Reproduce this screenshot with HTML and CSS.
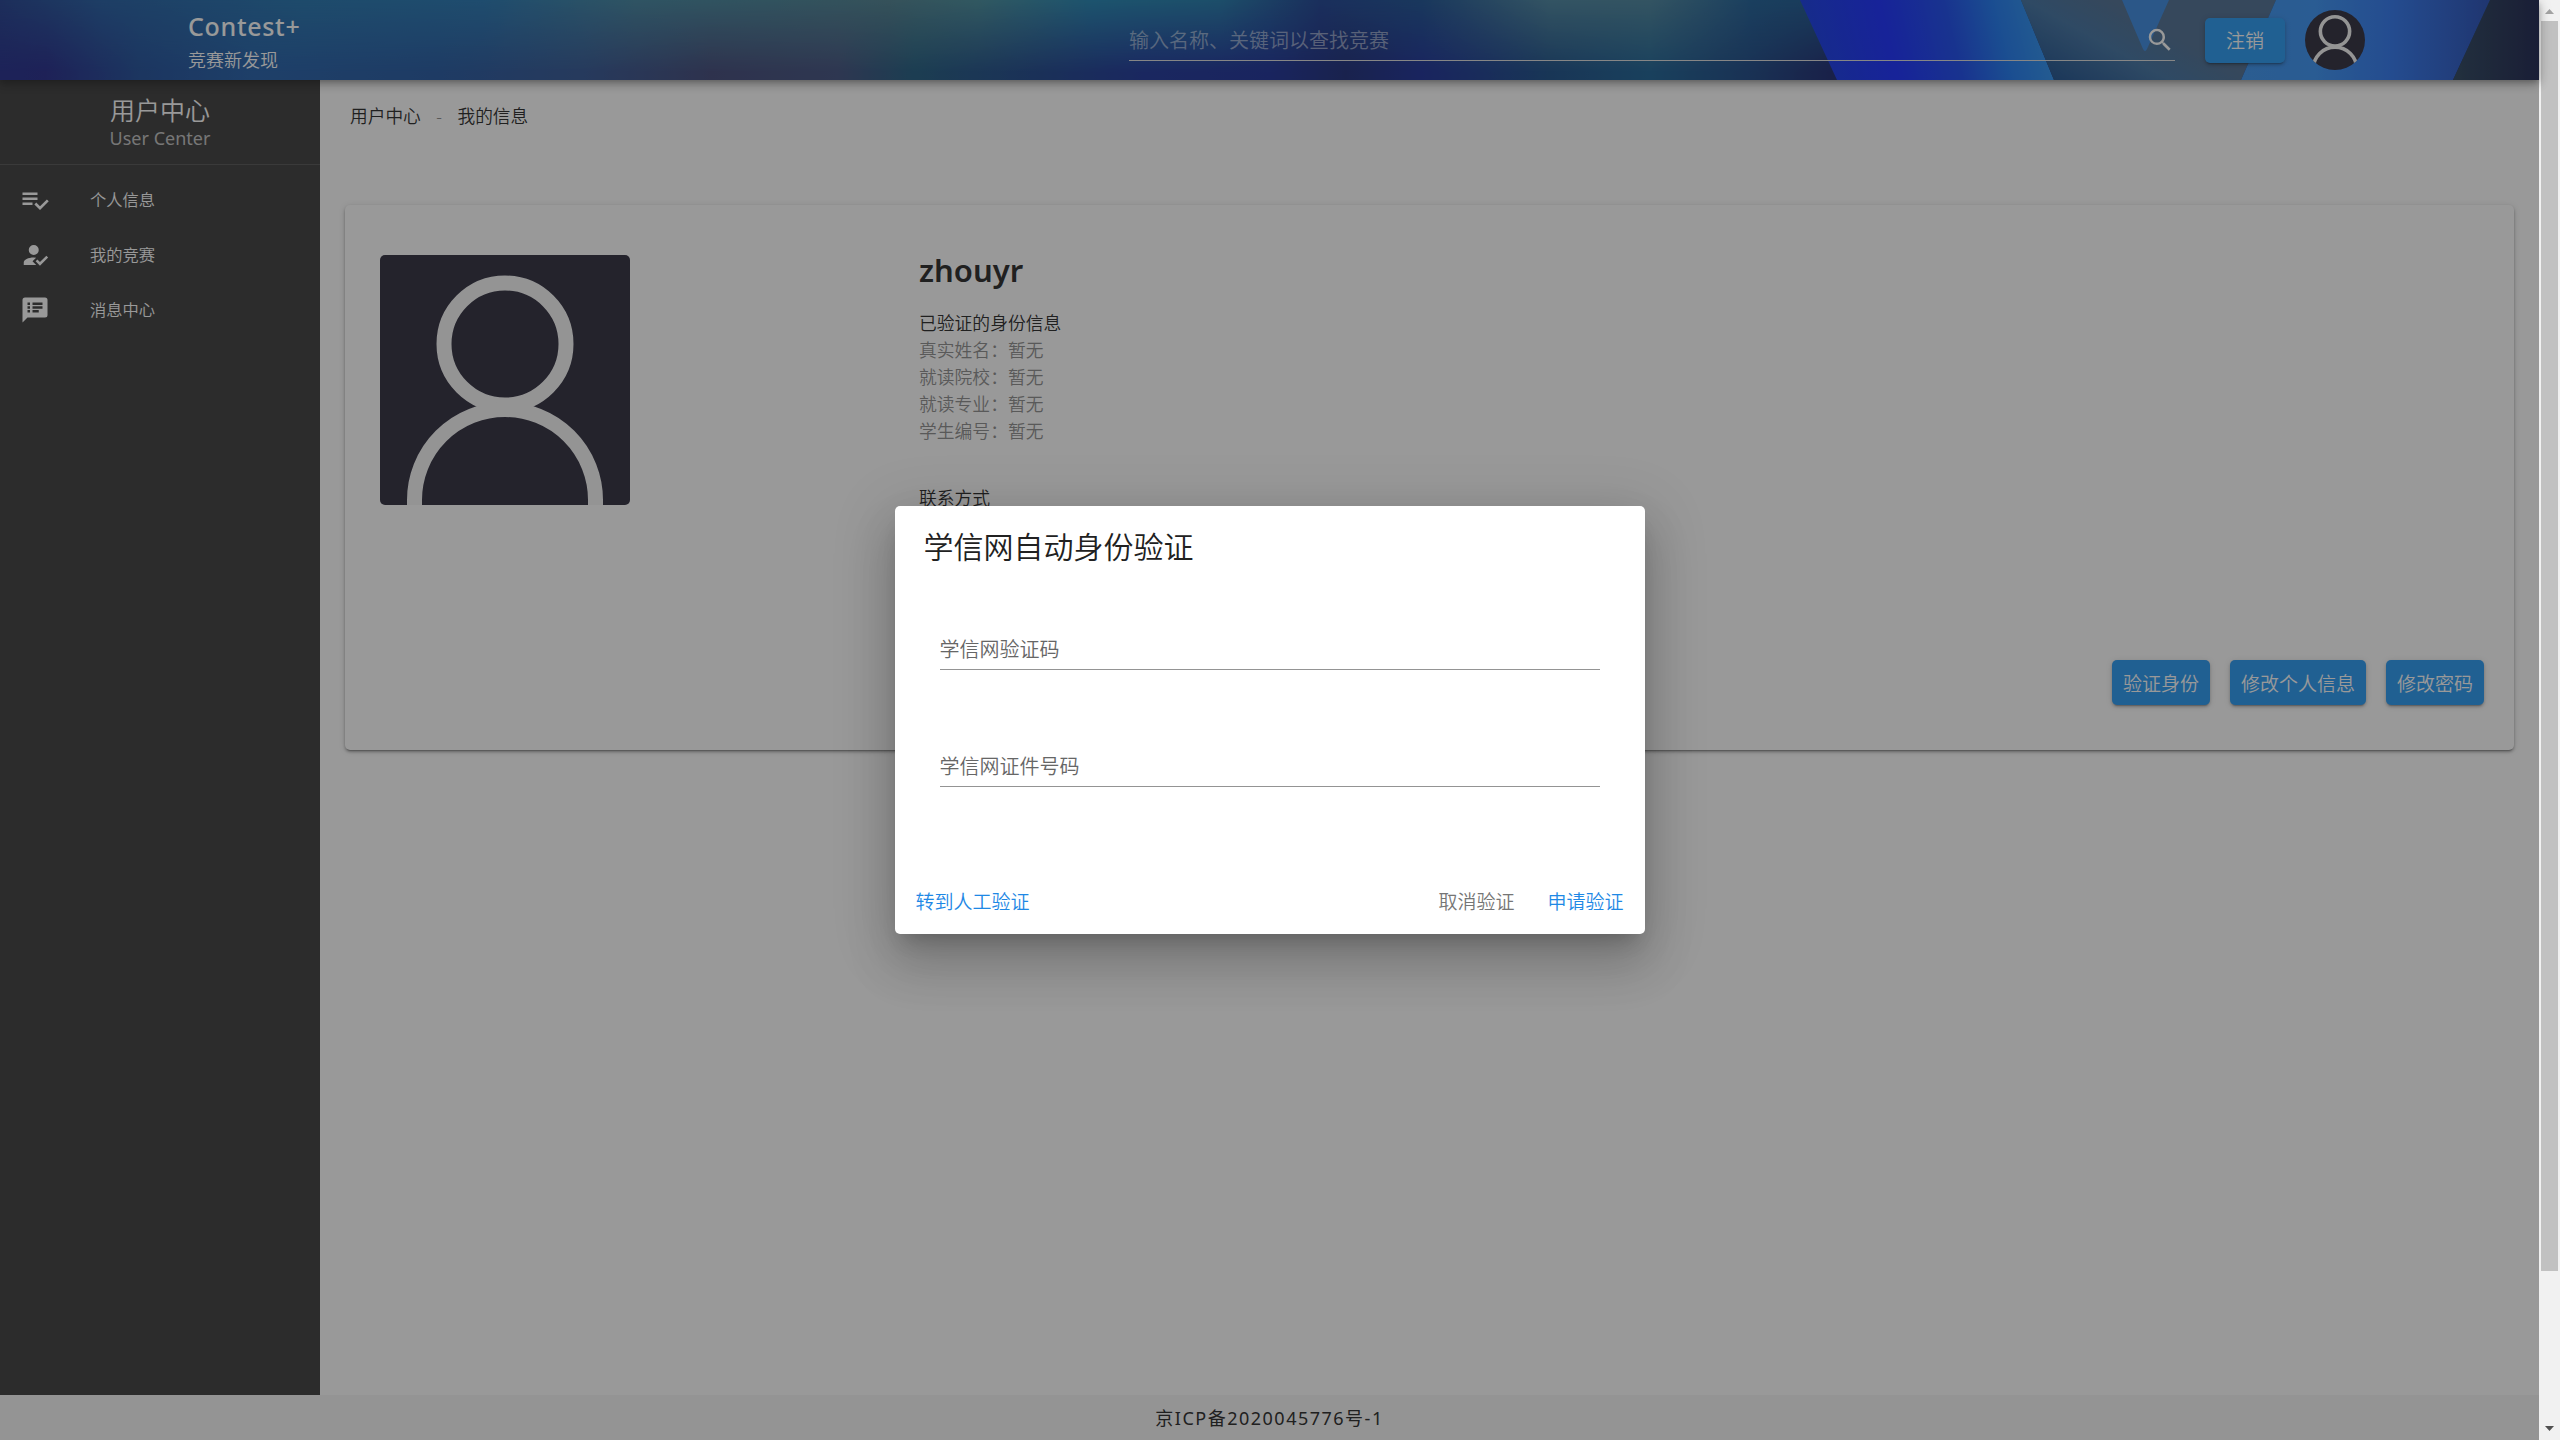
FILE: index.html
```html
<!DOCTYPE html>
<html lang="zh-CN">
<head>
<meta charset="utf-8">
<title>Contest+</title>
<link rel="stylesheet" href="styles.css">
</head>
<body>
<svg class="defs" aria-hidden="true">
  <symbol id="person" viewBox="0 0 250 250">
    <rect width="250" height="250" fill="#272537"/>
    <g fill="none" stroke="#f5f5f5" stroke-width="15">
      <circle cx="125" cy="89" r="61"/>
      <path d="M34.500 252V245a90.500 90.500 0 0 1 181 0V252"/>
    </g>
  </symbol>
</svg>
<div class="window">
  <div class="app">
    <header class="topbar">
      <svg class="topbar-art" viewBox="0 0 2539 80" preserveAspectRatio="none">
        <defs>
          <linearGradient id="top">
            <stop offset="0" stop-color="#1a3a8c"/>
            <stop offset=".04" stop-color="#1c58a0"/>
            <stop offset=".12" stop-color="#1c6fac"/>
            <stop offset=".19" stop-color="#1e72b0"/>
            <stop offset=".25" stop-color="#3c809c"/>
            <stop offset=".3" stop-color="#407e94"/>
            <stop offset=".35" stop-color="#487c8c"/>
            <stop offset=".385" stop-color="#408898"/>
            <stop offset=".43" stop-color="#1a80b0"/>
            <stop offset=".48" stop-color="#1a76a8"/>
            <stop offset=".52" stop-color="#163c90"/>
            <stop offset=".56" stop-color="#144c90"/>
            <stop offset=".61" stop-color="#44809c"/>
            <stop offset=".65" stop-color="#44809a"/>
            <stop offset=".69" stop-color="#165a94"/>
            <stop offset=".72" stop-color="#14548c"/>
          </linearGradient>
          <linearGradient id="bottom">
            <stop offset="0" stop-color="#1a2488"/>
            <stop offset=".018" stop-color="#1c2286"/>
            <stop offset=".055" stop-color="#184896"/>
            <stop offset=".1" stop-color="#1c5aa6"/>
            <stop offset=".17" stop-color="#1c529e"/>
            <stop offset=".23" stop-color="#2c5090"/>
            <stop offset=".28" stop-color="#3a4274"/>
            <stop offset=".33" stop-color="#3a4a7a"/>
            <stop offset=".36" stop-color="#18567c"/>
            <stop offset=".41" stop-color="#163e88"/>
            <stop offset=".45" stop-color="#162e96"/>
            <stop offset=".5" stop-color="#142894"/>
            <stop offset=".53" stop-color="#142474"/>
            <stop offset=".56" stop-color="#142894"/>
            <stop offset=".61" stop-color="#124884"/>
            <stop offset=".65" stop-color="#145c90"/>
            <stop offset=".69" stop-color="#144080"/>
            <stop offset=".72" stop-color="#14226c"/>
          </linearGradient>
          <linearGradient id="fade" x2="0" y2="1">
            <stop offset="0" stop-color="#000"/>
            <stop offset=".9" stop-color="#fff"/>
          </linearGradient>
          <mask id="lower"><rect width="2539" height="80" fill="url(#fade)"/></mask>
          <linearGradient id="band" gradientUnits="userSpaceOnUse" x1="1800" y1="60" x2="2050" y2="0">
            <stop offset="0" stop-color="#0e38e0"/>
            <stop offset=".35" stop-color="#0f25ff"/>
            <stop offset=".6" stop-color="#1244ec"/>
            <stop offset=".78" stop-color="#1674f0"/>
            <stop offset="1" stop-color="#2b96f0"/>
          </linearGradient>
          <linearGradient id="slate" gradientUnits="userSpaceOnUse" x1="2060" y1="90" x2="2110" y2="0">
            <stop offset="0" stop-color="#144888"/>
            <stop offset=".6" stop-color="#3b6d9e"/>
            <stop offset="1" stop-color="#48698e"/>
          </linearGradient>
          <linearGradient id="light">
            <stop offset="0" stop-color="#3490f0"/>
            <stop offset=".3" stop-color="#328ef4"/>
            <stop offset=".6" stop-color="#2872ee"/>
            <stop offset="1" stop-color="#1f48b4"/>
          </linearGradient>
          <linearGradient id="edge">
            <stop offset="0" stop-color="#243e58"/>
            <stop offset="1" stop-color="#141c48"/>
          </linearGradient>
        </defs>
        <rect width="2539" height="80" fill="url(#top)"/>
        <rect width="2539" height="80" fill="url(#bottom)" mask="url(#lower)"/>
        <path d="M1800 0H2021L2054 80H1837Z" fill="url(#band)"/>
        <path d="M2021 0H2276L2241 80H2054Z" fill="url(#slate)"/>
        <path d="M2122 0H2169L2147 49Q2145 53 2143 49Z" fill="#3486e0"/>
        <path d="M2276 0H2490L2453 80H2241Z" fill="url(#light)"/>
        <path d="M2490 0H2539V80H2453Z" fill="url(#edge)"/>
      </svg>
      <div class="brand">
        <div class="brand-name">Contest+</div>
        <div class="brand-sub">竞赛新发现</div>
      </div>
      <div class="search">
        <span>输入名称、关键词以查找竞赛</span>
        <svg class="icon" viewBox="0 0 24 24"><path d="M9.500 3A6.500 6.500 0 0 1 16 9.500c0 1.610-.59 3.090-1.560 4.230l.27.270h.79l5 5-1.500 1.500-5-5v-.79l-.27-.27A6.516 6.516 0 0 1 9.500 16a6.500 6.500 0 0 1 0-13m0 2C7 5 5 7 5 9.500S7 14 9.500 14 14 12 14 9.500 12 5 9.500 5Z"/></svg>
      </div>
      <button class="btn logout">注销</button>
      <svg class="avatar-small"><use href="#person"/></svg>
    </header>
    <div class="body">
      <aside class="sidebar">
        <div class="side-head">
          <div class="side-title">用户中心</div>
          <div class="side-sub">User Center</div>
        </div>
        <nav class="menu">
          <a class="menu-item"><svg class="icon" viewBox="0 0 24 24"><path d="M14 10H2v2h12v-2m0-4H2v2h12V6M2 16h8v-2H2v2m19.500-4.500L23 13l-6.990 7-4.510-4.500L13 14l3.010 3 5.490-5.500Z"/></svg><span>个人信息</span></a>
          <a class="menu-item"><svg class="icon" viewBox="0 0 24 24"><path d="M21.100 12.500l1.400 1.410-6.530 6.590L12.500 17l1.400-1.410 2.070 2.080 5.130-5.170M10 17l3 3H3v-2c0-2.210 3.580-4 8-4l1.890.11L10 17m1-13a4 4 0 0 1 4 4 4 4 0 0 1-4 4 4 4 0 0 1-4-4 4 4 0 0 1 4-4Z"/></svg><span>我的竞赛</span></a>
          <a class="menu-item"><svg class="icon" viewBox="0 0 24 24"><path d="M20 2H4a2 2 0 0 0-2 2v18l4-4h14a2 2 0 0 0 2-2V4a2 2 0 0 0-2-2M8 14H6v-2h2v2m0-3H6V9h2v2m0-3H6V6h2v2m7 6h-5v-2h5v2m3-3h-8V9h8v2m0-3h-8V6h8v2Z"/></svg><span>消息中心</span></a>
        </nav>
      </aside>
      <main class="main">
        <div class="crumbs"><span>用户中心</span><span class="sep">-</span><span>我的信息</span></div>
        <section class="card">
          <svg class="avatar"><use href="#person"/></svg>
          <div class="info">
            <h1>zhouyr</h1>
            <h2>已验证的身份信息</h2>
            <p>真实姓名：暂无</p>
            <p>就读院校：暂无</p>
            <p>就读专业：暂无</p>
            <p>学生编号：暂无</p>
            <h2 class="contact">联系方式</h2>
          </div>
          <div class="card-actions">
            <button class="btn">验证身份</button>
            <button class="btn">修改个人信息</button>
            <button class="btn">修改密码</button>
          </div>
        </section>
      </main>
    </div>
    <footer class="footer">京ICP备2020045776号-1</footer>
    <div class="overlay">
      <div class="dialog">
        <h3>学信网自动身份验证</h3>
        <div class="field">学信网验证码</div>
        <div class="field">学信网证件号码</div>
        <div class="dialog-actions">
          <span class="link">转到人工验证</span>
          <span class="cancel">取消验证</span>
          <span class="link">申请验证</span>
        </div>
      </div>
    </div>
  </div>
  <div class="scrollbar">
    <svg class="arrow" viewBox="0 0 21 21"><path d="M6 14h9l-4.500-5z" fill="#a3a3a3"/></svg>
    <div class="thumb"></div>
    <svg class="arrow" viewBox="0 0 21 21"><path d="M6 7h9l-4.500 5z" fill="#505050"/></svg>
  </div>
</div>
</body>
</html>
```
FILE: styles.css
```css
* { box-sizing: border-box; }
body {
  margin: 0;
  font-family: "Noto Sans", "Noto Sans CJK SC", sans-serif;
  font-weight: 350;
  color: #212121;
  overflow: hidden;
}
h1, h2, h3, p { margin: 0; font-weight: inherit; }
.defs { display: none; }
.window { display: flex; width: 2560px; height: 1440px; }
.app { position: relative; width: 2539px; display: flex; flex-direction: column; background: #fff; }
.icon { width: 30px; height: 30px; fill: #fff; flex: none; }

.topbar {
  position: relative;
  z-index: 1;
  flex: none;
  height: 80px;
  display: flex;
  align-items: center;
  padding-left: 188px;
  box-shadow: 0 3px 5px -1px rgba(0,0,0,.2), 0 5px 9px rgba(0,0,0,.2), 0 1px 13px rgba(0,0,0,.15);
}
.topbar-art { position: absolute; inset: 0; width: 100%; height: 100%; z-index: -1; }
.brand { width: 941px; color: #fff; }
.brand-name { font-size: 25px; line-height: 32px; font-weight: 500; padding-top: 6px; letter-spacing: .7px; }
.brand-sub { font-size: 18px; line-height: 32px; padding-top: 2px; }
.search {
  width: 1046px;
  height: 42px;
  display: flex;
  align-items: center;
  justify-content: space-between;
  border-bottom: 1px solid #ddd;
  font-size: 20px;
  color: rgba(255,255,255,.5);
}
.btn {
  height: 45px;
  padding: 0 11px;
  border: 0;
  border-radius: 5px;
  background: #2196f3;
  color: #fff;
  font: inherit;
  font-size: 19px;
  box-shadow: 0 3px 1px -2px rgba(0,0,0,.2), 0 2px 3px rgba(0,0,0,.2), 0 1px 6px rgba(0,0,0,.15);
}
.logout { width: 80px; margin-left: 30px; }
.avatar-small { width: 60px; height: 60px; margin-left: 20px; border-radius: 50%; }

.body { flex: 1; display: flex; }
.sidebar { width: 320px; background: #363636; color: #fff; }
.side-head { height: 85px; padding-top: 12px; text-align: center; border-bottom: 1px solid #505050; }
.side-title { font-size: 25px; line-height: 36px; }
.side-sub { font-size: 18px; font-weight: 400; line-height: 20px; color: rgba(255,255,255,.7); }
.menu { padding-top: 7px; }
.menu-item { height: 55px; display: flex; align-items: center; gap: 40px; padding-left: 20px; font-size: 16.250px; }
.menu-item span { padding-bottom: 2px; }

.main { flex: 1; padding: 23px 25px 0; }
.crumbs { display: flex; gap: 15.500px; padding-left: 5px; font-size: 17.700px; line-height: 27px; }
.sep { color: #888; }
.card {
  position: relative;
  height: 545px;
  margin-top: 75px;
  padding: 50px 35px;
  display: flex;
  border-radius: 5px;
  box-shadow: 0 3px 1px -2px rgba(0,0,0,.2), 0 2px 3px rgba(0,0,0,.3), 0 1px 6px rgba(0,0,0,.15);
}
.avatar { width: 250px; height: 250px; border-radius: 5px; }
.info { margin-left: 289px; font-size: 17.800px; line-height: 27px; }
.info h1 { font-size: 31px; font-weight: 600; line-height: 30px; margin-bottom: 25px; }
.info h2 { font-size: 17.800px; line-height: 27px; }
.info p { color: #8a8a8a; }
.info .contact { margin-top: 40px; }
.card-actions { position: absolute; right: 30px; bottom: 45px; display: flex; gap: 20px; }

.footer { height: 45px; text-align: center; line-height: 46px; font-size: 18px; font-weight: 400; letter-spacing: 1.500px; background: #f5f5f5; }

.overlay {
  position: absolute;
  inset: 0;
  z-index: 2;
  display: flex;
  align-items: center;
  justify-content: center;
  background: rgba(33,33,33,.46);
}
.dialog {
  width: 750px;
  height: 428px;
  padding: 20px 20px 0;
  border-radius: 5px;
  background: #fff;
  box-shadow: 0 14px 19px -9px rgba(0,0,0,.2), 0 30px 48px 4px rgba(0,0,0,.14), 0 11px 58px 10px rgba(0,0,0,.12);
}
.dialog h3 { padding-left: 9px; font-size: 30px; line-height: 42px; margin-bottom: 58px; }
.field { height: 44px; margin: 0 25px 74px; border-bottom: 1px solid #949494; font-size: 20px; line-height: 47px; color: #666; }
.field + .field { margin-top: -1px; margin-bottom: 100px; }
.dialog-actions { display: flex; gap: 33px; padding: 0 1px; font-size: 19px; line-height: 30px; }
.dialog-actions .link { color: #1e88e5; }
.dialog-actions .link:first-child { margin-right: auto; }
.cancel { color: #757575; }

.scrollbar { width: 21px; display: flex; flex-direction: column; background: #f1f1f1; }
.arrow { width: 21px; height: 21px; flex: none; }
.thumb { height: 1250px; margin: 0 2px 148px; background: #c1c1c1; }
```
